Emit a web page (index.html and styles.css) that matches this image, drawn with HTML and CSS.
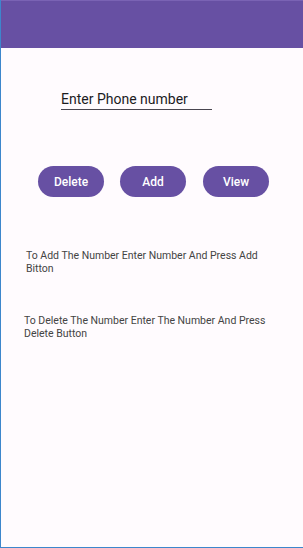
FILE: index.html
```html
<!DOCTYPE html>
<html lang="en">
<head>
    <meta charset="UTF-8">
    <meta name="viewport" content="width=device-width, initial-scale=1.0">
    <title>Phone Numbers</title>
    <link rel="stylesheet" href="styles.css">
</head>
<body>
    <div id="screen">
        <div class="app-bar"></div>

        <div class="phone-field">
            <input type="text" id="phone" placeholder="Enter Phone number">
        </div>

        <div class="actions">
            <button class="pill">Delete</button>
            <button class="pill">Add</button>
            <button class="pill">View</button>
        </div>

        <p class="hint hint-add">To Add The Number Enter Number And Press Add Bitton</p>
        <p class="hint hint-delete">To Delete The Number Enter The Number And Press Delete Button</p>
    </div>
</body>
</html>
```

FILE: styles.css
```css
html, body { margin: 0; padding: 0; }
body {
    font-family: Roboto, "Noto Sans", Arial, sans-serif;
    background-color: #fffbfe;
}
#screen {
    height: 547px;
    border-left: 1px solid #3d86cc;
    border-bottom: 1px solid #3d86cc;
    background-color: #fffbfe;
    overflow: hidden;
}
.app-bar {
    height: 47px;
    background-color: #6750a3;
    border-top: 1px solid #7a63b4;
}
.phone-field { padding: 41px 0 0 60px; }
.phone-field input {
    width: 151px;
    border: none;
    border-bottom: 1px solid #49454f;
    background: transparent;
    font-family: inherit;
    font-size: 14px;
    color: #1c1b1f;
    padding: 0 0 3px 0;
    height: 14px;
    outline: none;
}
.phone-field input::placeholder { color: #1c1b1f; opacity: 1; }
.actions {
    display: flex;
    gap: 16px;
    padding: 56px 0 0 37px;
}
.pill {
    width: 66px; height: 31px;
    border: none; border-radius: 16px;
    background-color: #6750a3;
    color: white;
    font-family: inherit;
    font-size: 12px; font-weight: 500;
    padding: 0;
}
.pill:last-child { margin-left: 1px; }
.hint {
    margin: 0;
    width: 252px;
    font-size: 10.5px;
    line-height: 12.5px;
    color: #444;
}
.hint-add { padding: 53px 0 0 25px; }
.hint-delete { padding: 40px 0 0 23px; }
```
